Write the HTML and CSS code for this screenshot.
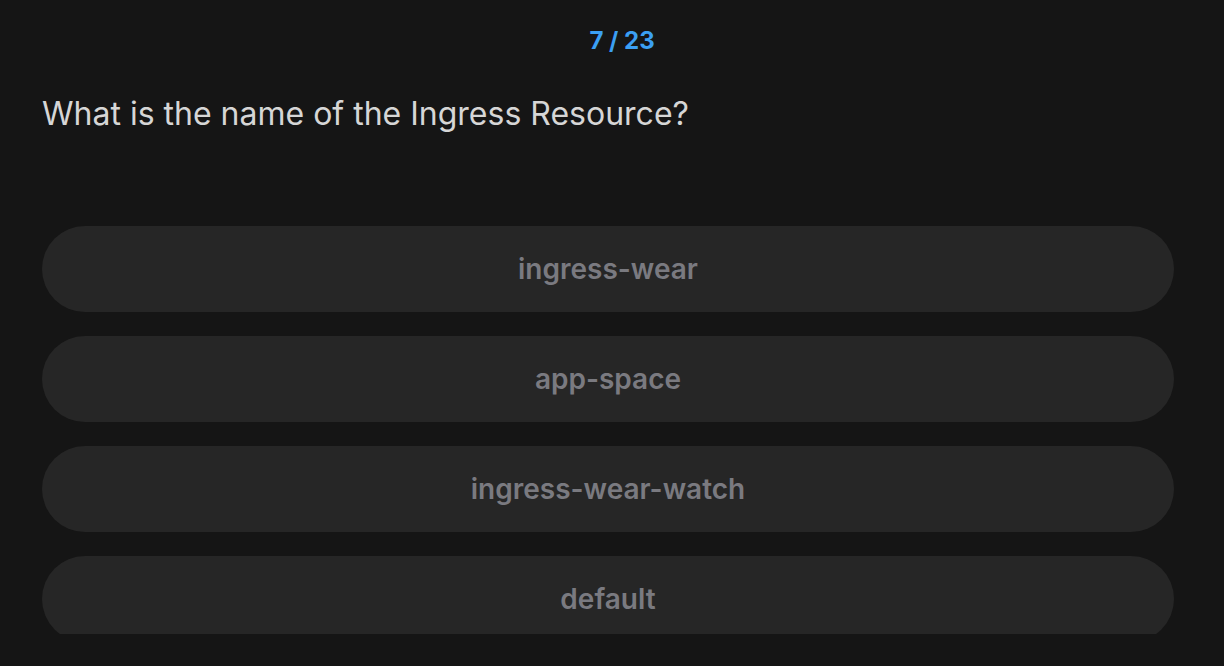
FILE: index.html
```html
<!DOCTYPE html>
<html>
<head>
<meta charset="utf-8">
<link rel="stylesheet" href="styles.css">
</head>
<body>
<div class="viewport">
  <div class="quiz">
    <div class="counter">7 / 23</div>
    <h1 class="question">What is the name of the Ingress Resource?</h1>
    <div class="options">
      <button class="option">ingress-wear</button>
      <button class="option">app-space</button>
      <button class="option">ingress-wear-watch</button>
      <button class="option">default</button>
    </div>
  </div>
</div>
</body>
</html>
```
FILE: styles.css
```css
html, body {
  margin: 0;
  padding: 0;
  background: #151515;
  font-family: Inter, "Noto Sans", sans-serif;
}
.viewport {
  height: 634px;
  overflow: hidden;
}
.quiz {
  padding: 0 50px 0 42px;
  display: flex;
  flex-direction: column;
}
.counter {
  margin-top: 27px;
  padding-left: 28px;
  text-align: center;
  color: #3b9ff3;
  font-size: 24px;
  font-weight: 700;
  line-height: 28px;
}
.question {
  margin: 40px 0 0 0;
  color: #d6d6d6;
  font-size: 32px;
  font-weight: 400;
  line-height: 38px;
}
.options {
  margin-top: 93px;
  display: flex;
  flex-direction: column;
  gap: 24px;
}
.option {
  height: 86px;
  border: none;
  border-radius: 43px;
  background: #262626;
  color: #7a7a80;
  font-family: Inter, "Noto Sans", sans-serif;
  font-size: 28px;
  font-weight: 600;
  padding: 0;
}
```
